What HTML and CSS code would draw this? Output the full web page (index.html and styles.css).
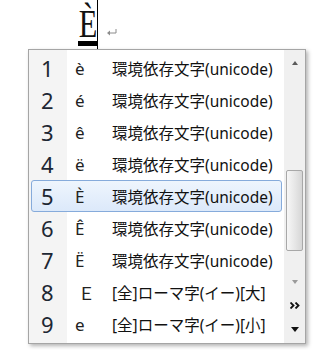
FILE: index.html
```html
<!DOCTYPE html>
<html lang="ja">

<head>
    <meta charset="UTF-8">
    <meta name="viewport" content="width=device-width, initial-scale=1.0">
    <title>変換候補</title>

    <link rel="stylesheet" href="styles.css">
</head>

<body>
    <!-- 入力中の文字 -->
    <div class="doc">
        <span class="comp"><span class="glyph">È</span></span>
        <span class="caret"></span>
        <svg class="ret" width="10" height="7" viewBox="0 0 10 7">
            <path d="M9 0 V4 H2.5" fill="none" stroke="#8c8c8c" stroke-width="1"/>
            <polygon points="0,4 3,1.5 3,6.5" fill="#8c8c8c"/>
        </svg>
    </div>

    <!-- 候補ウィンドウ -->
    <div class="popup">
        <ul class="list">
            <li class="row"><span class="num">1</span><span class="ch">è</span><span class="desc">環境依存文字(unicode)</span></li>
            <li class="row"><span class="num">2</span><span class="ch">é</span><span class="desc">環境依存文字(unicode)</span></li>
            <li class="row"><span class="num">3</span><span class="ch">ê</span><span class="desc">環境依存文字(unicode)</span></li>
            <li class="row"><span class="num">4</span><span class="ch">ë</span><span class="desc">環境依存文字(unicode)</span></li>
            <li class="row sel"><span class="num">5</span><span class="ch">È</span><span class="desc">環境依存文字(unicode)</span></li>
            <li class="row"><span class="num">6</span><span class="ch">Ê</span><span class="desc">環境依存文字(unicode)</span></li>
            <li class="row"><span class="num">7</span><span class="ch">Ë</span><span class="desc">環境依存文字(unicode)</span></li>
            <li class="row"><span class="num">8</span><span class="ch wide">Ｅ</span><span class="desc">[全]ローマ字(イー)[大]</span></li>
            <li class="row"><span class="num">9</span><span class="ch">e</span><span class="desc">[全]ローマ字(イー)[小]</span></li>
        </ul>
        <div class="track">
            <span class="up"></span>
            <span class="thumb"></span>
            <span class="down faint"></span>
            <svg class="more" width="10" height="7" viewBox="0 0 10 7">
                <polyline points="0.5,0.5 3.5,3.5 0.5,6.5" fill="none" stroke="#111" stroke-width="1.8"/>
                <polyline points="5.5,0.5 8.5,3.5 5.5,6.5" fill="none" stroke="#111" stroke-width="1.8"/>
            </svg>
            <span class="down"></span>
        </div>
    </div>
</body>

</html>
```

FILE: styles.css
```css
body {
    margin: 0;
    width: 320px;
    height: 350px;
    overflow: hidden;
    background-color: #fff;
    font-family: "Noto Sans", "Noto Sans CJK JP", sans-serif;
}

.doc {
    display: flex;
    align-items: flex-start;
    height: 49px;
    padding-left: 78px;
}

.comp {
    display: block;
    width: 19px;
    height: 36px;
    padding-top: 5px;
    border-bottom: 5px solid #000;
}

.glyph {
    display: block;
    width: 24px;
    margin-left: -2.5px;
    font: 39px/37px "Liberation Serif", serif;
    color: #111;
    transform: scaleX(0.78);
}

.caret {
    width: 1px;
    height: 49px;
    background-color: #000;
}

.ret {
    margin: 29px 0 0 9px;
}

.popup {
    display: flex;
    width: 276px;
    height: 293px;
    margin-left: 28px;
    border: 1px solid #a5a5a5;
    background-color: #fff;
    box-shadow: 2px 2px 4px rgba(0, 0, 0, 0.3);
}

.list {
    flex: 1;
    margin: 0;
    padding: 2px 0;
    list-style: none;
    background: linear-gradient(to right, #f4f4f4 38px, #fff 38px);
}

.row {
    display: flex;
    align-items: center;
    height: 30px;
    margin: 0 2px;
    border: 1px solid transparent;
    border-radius: 3px;
}

.row.sel {
    border-color: #86abdb;
    background: linear-gradient(#eef5fd, #dce9fa);
}

.num {
    box-sizing: border-box;
    width: 35px;
    padding-left: 9px;
    font-size: 22px;
    line-height: 1;
    color: #1d2733;
}

.ch {
    box-sizing: border-box;
    width: 45px;
    padding-left: 8px;
    font-size: 17px;
    color: #222;
}

.ch.wide {
    padding-left: 11px;
}

.desc {
    font-size: 15.5px;
    color: #111;
    white-space: nowrap;
}

.track {
    display: flex;
    flex-direction: column;
    align-items: center;
    width: 21px;
    background-color: #f0f0f0;
}

.up {
    margin-top: 11px;
    border-left: 3.5px solid transparent;
    border-right: 3.5px solid transparent;
    border-bottom: 4px solid #5a5a5a;
}

.thumb {
    box-sizing: border-box;
    width: 17px;
    height: 81px;
    margin-top: 105px;
    border: 1px solid #a8a8a8;
    border-radius: 2px;
    background: linear-gradient(to right, #f7f7f7, #e4e4e4 60%, #d6d6d6);
}

.down {
    margin-top: 18px;
    border-left: 4.5px solid transparent;
    border-right: 4.5px solid transparent;
    border-top: 5px solid #111;
}

.down.faint {
    margin-top: 29px;
    border-left-width: 3.5px;
    border-right-width: 3.5px;
    border-top: 4px solid #9a9a9a;
}

.more {
    margin-top: 18px;
}
```
